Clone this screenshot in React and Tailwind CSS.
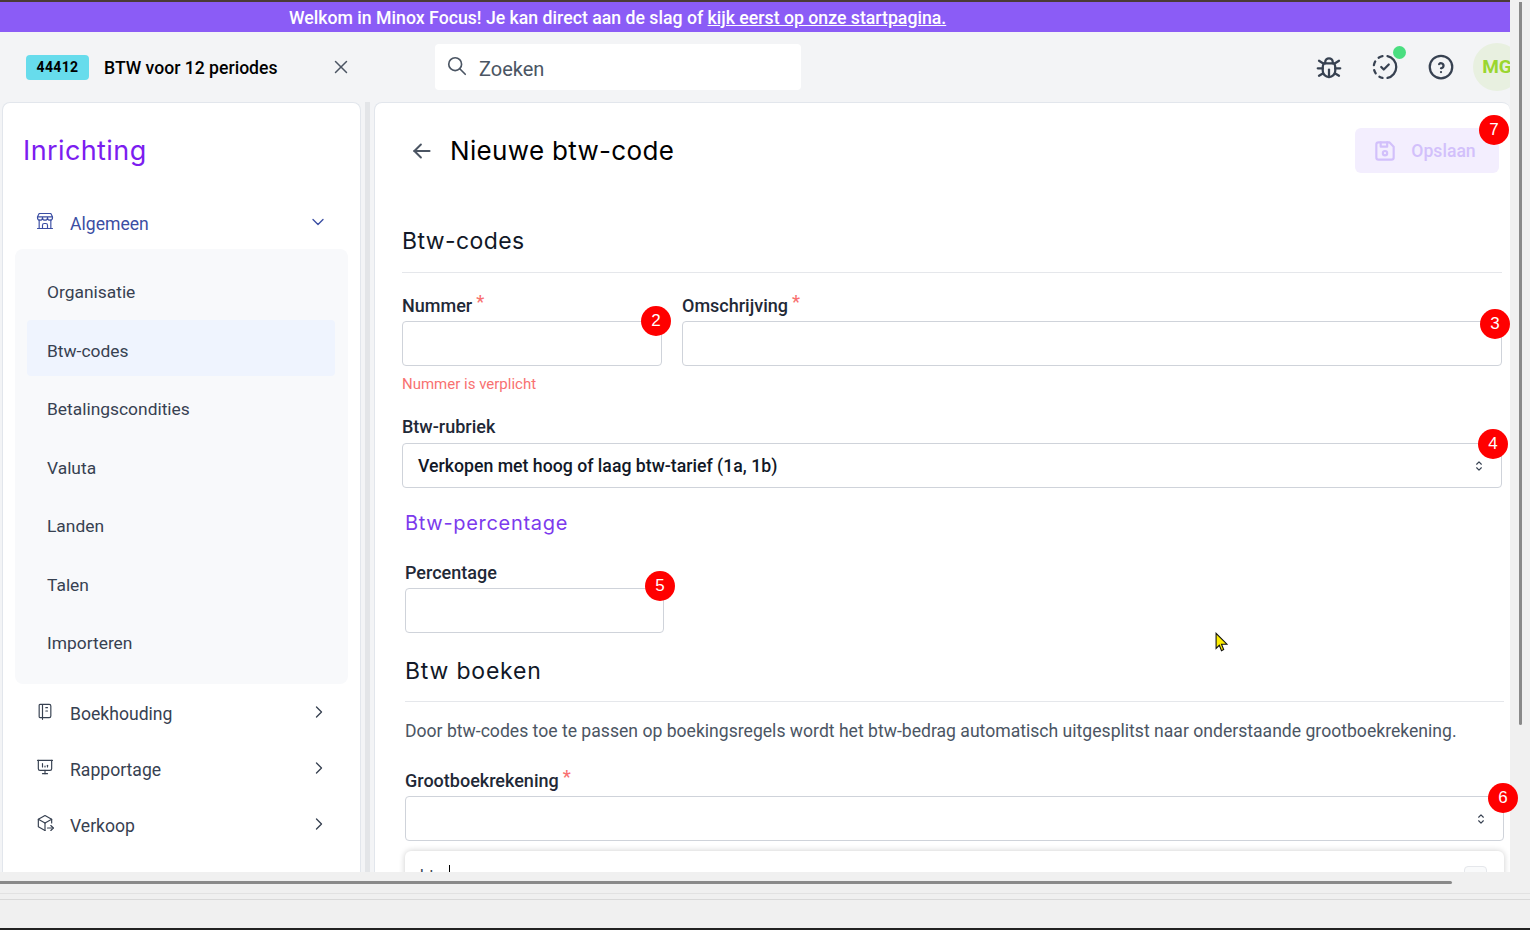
import React from 'react';
import { TbX, TbSearch, TbBug, TbHelpCircle, TbProgressCheck, TbChevronDown, TbChevronRight, TbSelector, TbArrowLeft, TbBuildingStore, TbNotebook, TbPresentationAnalytics, TbPackageExport, TbDeviceFloppy } from 'react-icons/tb';

const subItems = ['Organisatie', 'Btw-codes', 'Betalingscondities', 'Valuta', 'Landen', 'Talen', 'Importeren'];

function Badge({ n, className }) {
    return (
        <span className={`absolute z-10 flex h-[30px] w-[30px] items-center justify-center rounded-full bg-[#ff0000] font-['Liberation_Sans',sans-serif] text-[17px] text-white ${className}`}>
            {n}
        </span>
    );
}

function NavItem({ icon: Icon, label, className = 'mt-0' }) {
    return (
        <div className={`flex h-[56px] items-center pl-[21px] pr-[31px] text-[#374151] ${className}`}>
            <Icon size={20} strokeWidth={1.4} className="-mt-[4px] -ml-[1px]" />
            <span className="ml-[15px] mt-[2px] flex-1 text-[17.6px]">{label}</span>
            <TbChevronRight size={20} strokeWidth={1.6} className="-mt-[2px]" />
        </div>
    );
}

function Label({ children, required }) {
    return (
        <div className="flex h-[26px] items-center text-[18px] font-medium text-[#1f2937]">
            {children}
            {required && <span className="-mt-[8px] ml-[4px] text-[#f87171]">*</span>}
        </div>
    );
}

export default function App() {
    return (
        <div className="flex h-[930px] w-[1530px] flex-col overflow-hidden bg-[#f0f0f0] font-['Roboto',sans-serif]">
            <div className="flex h-[872px] shrink-0">
                <div className="relative flex w-[1510px] shrink-0 flex-col bg-[#f3f4f6]">
                    <div className="h-[2px] shrink-0 bg-[#4a3b35]" />
                    <div className="flex h-[30px] shrink-0 items-center bg-[#8b5cf6] pl-[289px] pt-[2px] text-[17.7px] font-medium text-white">
                        <span>Welkom in Minox Focus! Je kan direct aan de slag of <u>kijk eerst op onze startpagina.</u></span>
                    </div>

                    <div className="flex h-[70px] shrink-0 items-center overflow-hidden">
                        <div className="ml-[26px] flex h-[25px] w-[63px] items-center justify-center rounded bg-[#67dcec] text-[14px] font-bold tracking-wide text-black">44412</div>
                        <span className="ml-[15px] mt-[2px] w-[226px] text-[17.6px] font-medium text-black">BTW voor 12 periodes</span>
                        <TbX size={22} strokeWidth={1.6} className="text-[#4b5563]" />
                        <div className="ml-[83px] flex h-[46px] w-[366px] items-center rounded bg-white pl-[11px] text-[#4b5563]">
                            <TbSearch size={22} strokeWidth={1.8} className="-mt-[3px]" />
                            <span className="ml-[11px] mt-[4px] text-[20px]">Zoeken</span>
                        </div>
                        <div className="flex-1" />
                        <TbBug size={30} strokeWidth={1.8} className="text-[#374151]" />
                        <div className="relative ml-[26px]">
                            <TbProgressCheck size={30} strokeWidth={1.8} className="text-[#374151]" />
                            <span className="absolute -right-[6px] -top-[6px] h-[13px] w-[13px] rounded-full bg-[#4ade80]" />
                        </div>
                        <TbHelpCircle size={30} strokeWidth={1.8} className="ml-[26px] text-[#374151]" />
                        <div className="ml-[17px] flex h-[48px] w-[48px] shrink-0 -mr-[11px] items-center justify-center rounded-full bg-[#e8f0e0] text-[19px] font-bold text-[#9ad62f]">
                            <span className="whitespace-nowrap">MG</span>
                        </div>
                    </div>

                    <div className="flex min-h-0 flex-1">
                        <aside className="ml-[2px] w-[359px] shrink-0 overflow-hidden rounded-t-lg border border-b-0 border-[#e2e6ec] bg-white">
                            <h1 className="ml-[20px] mt-[29px] font-['Inter',sans-serif] text-[27px] leading-[38px] tracking-[0.4px] text-[#7c1df0]">Inrichting</h1>
                            <div className="mt-[25px] flex h-[56px] items-center pl-[32px] pr-[32px] text-[#3b4ea3]">
                                <TbBuildingStore size={20} strokeWidth={1.4} className="-mt-[4px]" />
                                <span className="ml-[15px] mt-[2px] flex-1 text-[17.6px]">Algemeen</span>
                                <TbChevronDown size={20} strokeWidth={1.6} className="-mt-[3px]" />
                            </div>
                            <div className="mx-[12px] -mt-[2px] flex h-[435px] flex-col rounded-lg bg-[#f8f9fb] pl-[12px] pr-[13px] pt-[12px]">
                                {subItems.map((item) => (
                                    <div key={item} className={`mb-[2px] flex h-[56.5px] shrink-0 items-center rounded pl-[20px] pt-[6px] text-[17.4px] text-[#374151] ${item === 'Btw-codes' ? 'bg-[#eff4fe]' : ''}`}>
                                        {item}
                                    </div>
                                ))}
                            </div>
                            <div className="ml-[12px]">
                                <NavItem icon={TbNotebook} label="Boekhouding" className="mt-[1px]" />
                                <NavItem icon={TbPresentationAnalytics} label="Rapportage" />
                                <NavItem icon={TbPackageExport} label="Verkoop" />
                            </div>
                        </aside>

                        <div className="ml-[4px] w-[5px] shrink-0 bg-[#e3e5e8]" />

                        <main className="relative ml-[4px] min-w-0 flex-1 rounded-t-lg border border-b-0 border-r-0 border-[#e2e6ec] bg-white pl-[27px] pr-[7px]">
                            <div className="flex h-[70px] items-end pb-[3px]">
                                <TbArrowLeft size={26} strokeWidth={1.8} className="mb-[6px] ml-[7px] text-[#4b5563]" />
                                <h2 className="ml-[15px] font-['Inter',sans-serif] text-[26px] leading-[38px] tracking-[0.33px] text-black">Nieuwe btw-code</h2>
                            </div>
                            <div className="absolute right-[11px] top-[25px] flex h-[45px] w-[144px] items-center justify-center gap-[13px] rounded-md bg-[#f3eefe] pr-[6px] text-[17.6px] font-medium text-[#d2c0fb]">
                                <TbDeviceFloppy size={26} strokeWidth={2} />
                                <span className="mt-[2px]">Opslaan</span>
                                <Badge n={7} className="-right-[10px] -top-[13px]" />
                            </div>

                            <h3 className="mt-[49px] font-['Inter',sans-serif] text-[23px] leading-[38px] tracking-[0.4px] text-[#111827]">Btw-codes</h3>
                            <div className="mt-[12px] h-px w-[1100px] bg-[#e5e7eb]" />

                            <div className="mt-[19px] flex w-[1100px] gap-[20px]">
                                <div className="relative w-[260px]">
                                    <Label required>Nummer</Label>
                                    <div className="mt-[3px] h-[45px] rounded border border-[#cfd3da]" />
                                    <div className="mt-[8px] text-[15px] leading-[20px] text-[#f87171]">Nummer is verplicht</div>
                                    <Badge n={2} className="right-[-9px] top-[14px]" />
                                </div>
                                <div className="relative flex-1">
                                    <Label required>Omschrijving</Label>
                                    <div className="mt-[3px] h-[45px] rounded border border-[#cfd3da]" />
                                    <Badge n={3} className="right-[-8px] top-[17px]" />
                                </div>
                            </div>

                            <div className="relative mt-[19px] w-[1100px]">
                                <Label>Btw-rubriek</Label>
                                <div className="mt-[4px] flex h-[45px] items-center justify-between rounded border border-[#cfd3da] pl-[15px] pr-[15px] text-[17.7px] font-medium text-[#111827]">
                                    <span className="mt-[2px]">Verkopen met hoog of laag btw-tarief (1a, 1b)</span>
                                    <TbSelector size={14} strokeWidth={2} className="text-[#374151]" />
                                </div>
                                <Badge n={4} className="right-[-6px] top-[16px]" />
                            </div>

                            <div className="ml-[3px] w-[1099px]">
                                <h4 className="mt-[20px] font-['Inter',sans-serif] text-[20px] leading-[30px] tracking-[0.7px] text-[#7c3aed]">Btw-percentage</h4>
                                <div className="relative mt-[21px] w-[259px]">
                                    <Label>Percentage</Label>
                                    <div className="mt-[3px] h-[45px] rounded border border-[#cfd3da]" />
                                    <Badge n={5} className="right-[-11px] top-[12px]" />
                                </div>

                                <h3 className="mt-[19px] font-['Inter',sans-serif] text-[23px] leading-[38px] tracking-[0.8px] text-[#111827]">Btw boeken</h3>
                                <div className="mt-[11px] h-px bg-[#e5e7eb]" />
                                <p className="mt-[17px] whitespace-nowrap text-[17.6px] leading-[24px] text-[#4b5563]">
                                    Door btw-codes toe te passen op boekingsregels wordt het btw-bedrag automatisch uitgesplitst naar onderstaande grootboekrekening.
                                </p>

                                <div className="relative mt-[24px]">
                                    <Label required>Grootboekrekening</Label>
                                    <div className="mt-[3px] flex h-[45px] items-center justify-end rounded border border-[#cfd3da] pr-[15px]">
                                        <TbSelector size={14} strokeWidth={2} className="text-[#374151]" />
                                    </div>
                                    <Badge n={6} className="right-[-14px] top-[16px]" />
                                </div>

                                {/* card carries on below the fold, wrapper cuts it off at the window edge */}
                                <div className="-mx-[8px] mt-[2px] h-[29px] overflow-hidden px-[8px] pt-[8px]">
                                    <div className="flex h-[60px] justify-between rounded-md bg-white pl-[15px] pr-[17px] pt-[15px] shadow-[0_0_6px_rgba(0,0,0,0.2)]">
                                        <span className="flex h-[20px] items-center text-[16px] text-[#374151]">
                                            btw<span className="ml-[3px] h-[22px] w-px bg-black" />
                                        </span>
                                        <span className="h-[20px] w-[23px] rounded border border-[#e5e7eb] bg-[#f9fafb]" />
                                    </div>
                                </div>
                            </div>

                            <svg viewBox="0 0 12 18" className="absolute left-[840px] top-[529px] h-[20px] w-[13px]">
                                <path d="M1 1 L1 15 L4 12 L6 17 L8 16 L6 11 L11 11 Z" fill="#ffee00" stroke="#111" strokeWidth="1" />
                            </svg>
                        </main>
                    </div>
                </div>

                <div className="flex w-[20px] shrink-0 justify-center bg-[#f0f0f0] pt-[2px]">
                    <div className="h-[723px] w-[3px] rounded-b bg-[#8a8a8a]" />
                </div>
            </div>

            <div className="flex h-[58px] shrink-0 flex-col bg-[#f0f0f0]">
                <div className="mt-[9px] h-[3px] w-[1452px] rounded-r bg-[#8a8a8a]" />
                <div className="mt-[9px] h-px bg-[#e2e2e2]" />
                <div className="mt-[5px] h-px bg-[#d9d9d9]" />
                <div className="flex-1" />
                <div className="h-[2px] bg-[#222]" />
            </div>
        </div>
    );
}
